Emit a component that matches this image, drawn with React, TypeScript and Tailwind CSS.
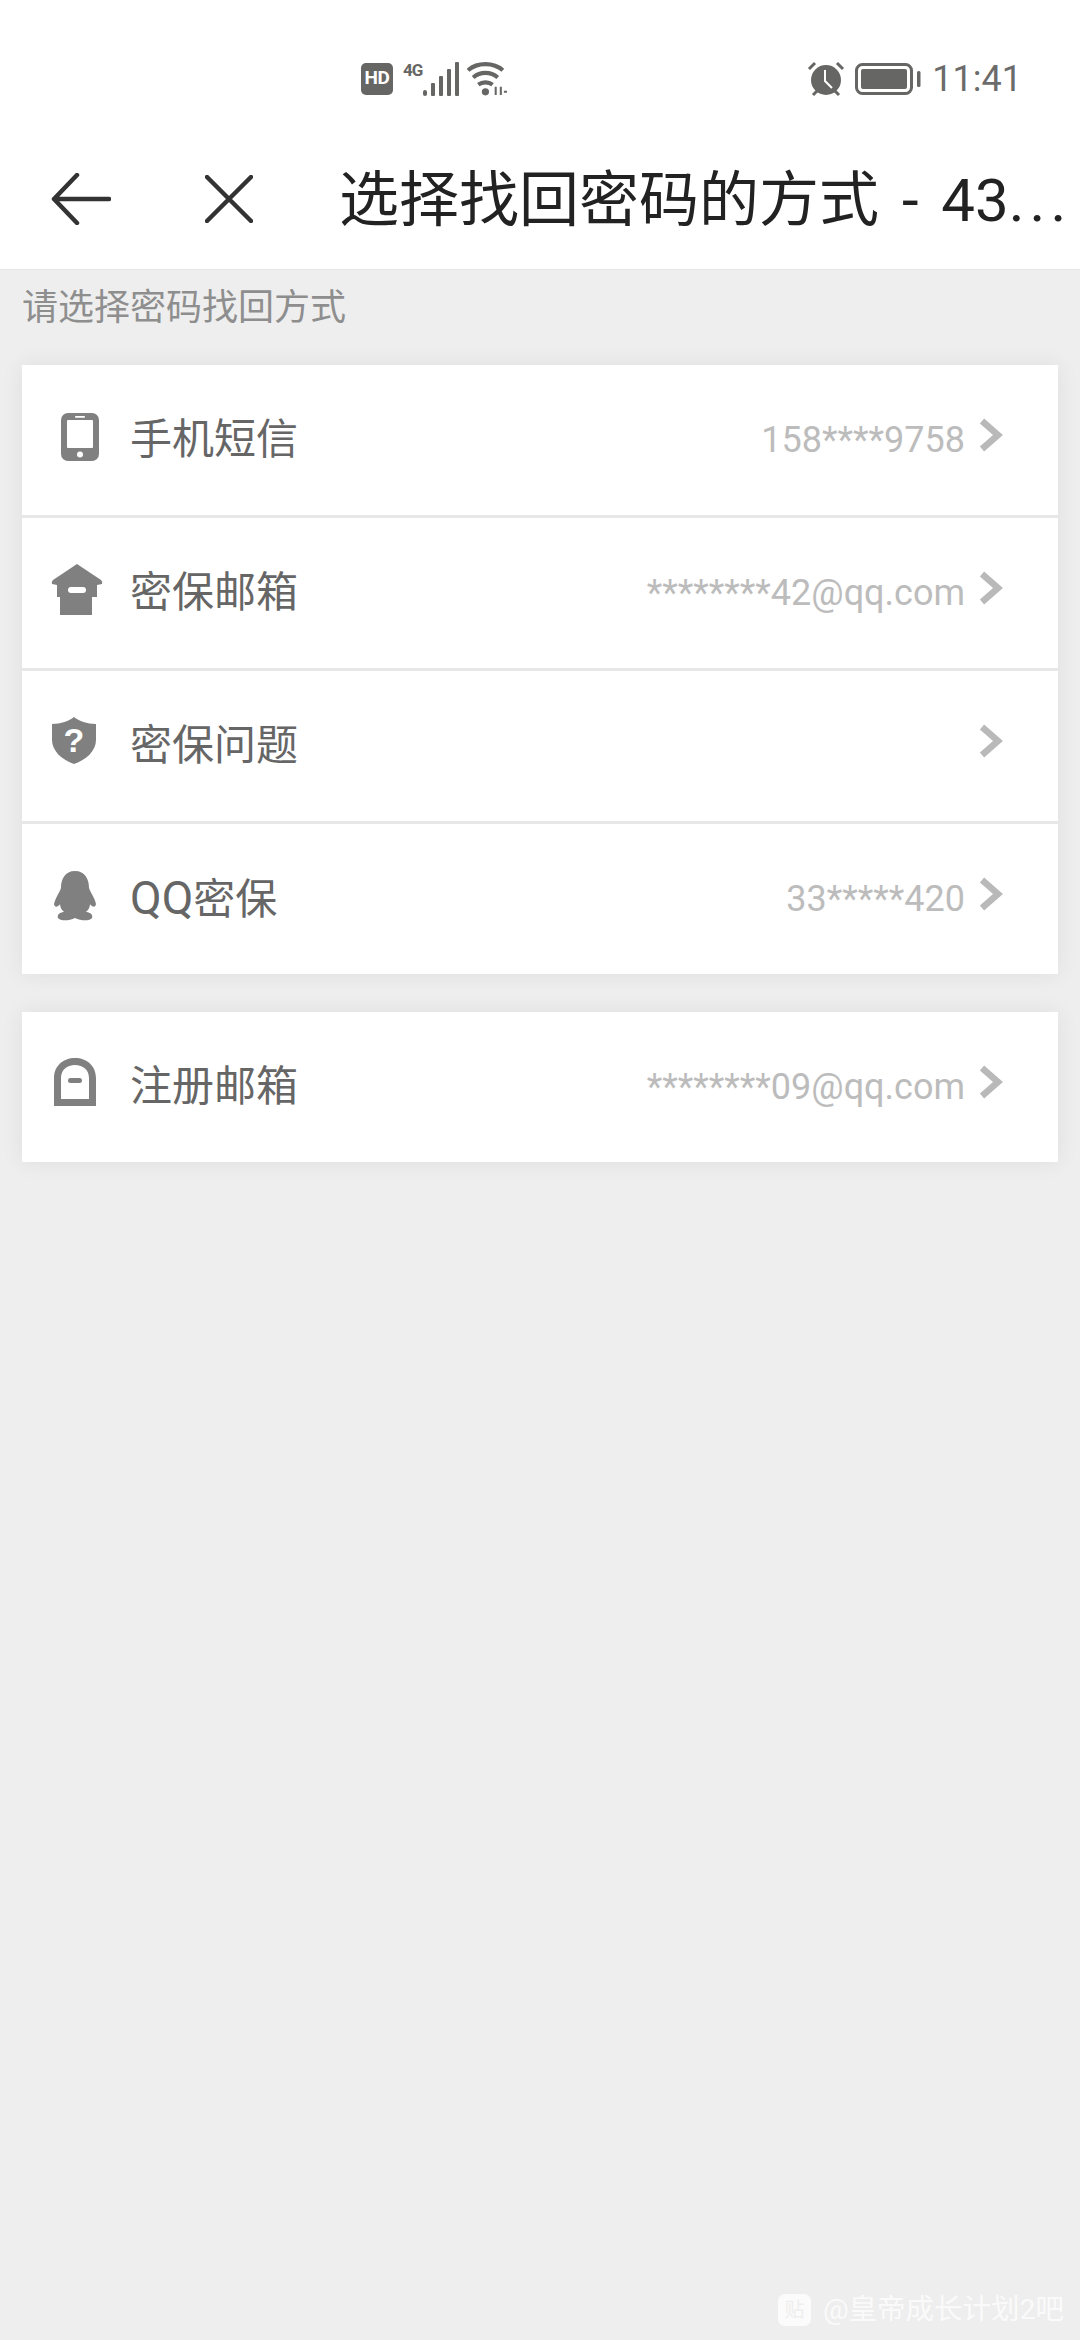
const font = "font-['Roboto','Noto_Sans_CJK_SC',sans-serif]";

function Chevron() {
  return (
    <svg width="24" height="36" viewBox="0 0 24 36" className="shrink-0">
      <path d="M3 3 L19 17 L3 31" fill="none" stroke="#b9b9b9" strokeWidth="6.5" />
    </svg>
  );
}

function PhoneIcon() {
  return (
    <svg width="38" height="48" viewBox="0 0 38 48">
      <rect width="38" height="48" rx="7" fill="#808080" />
      <rect x="6" y="7" width="26" height="28" rx="1" fill="#fff" />
      <rect x="14" y="3" width="10" height="1.8" rx="0.9" fill="#fff" />
      <circle cx="19" cy="41.5" r="3" fill="#fff" />
    </svg>
  );
}

function MailboxIcon() {
  return (
    <svg width="52" height="52" viewBox="0 0 52 52">
      <path
        d="M26 0 L50 16 Q52 18 51 20 L46 21 L46 33 L41 33 L41 51 L9 51 L9 33 L6 33 L6 21 L1 20 Q0 18 2 16 Z"
        fill="#808080"
      />
      <rect x="17" y="23" width="18" height="6" rx="3" fill="#fff" />
    </svg>
  );
}

function ShieldIcon() {
  return (
    <svg width="44" height="48" viewBox="0 0 44 48">
      <path
        d="M22 0 C27 4 35 7 44 7 L44 23 C44 34 34 43 22 47 C10 43 0 34 0 23 L0 7 C9 7 17 4 22 0 Z"
        fill="#808080"
      />
      <text
        x="22"
        y="35"
        textAnchor="middle"
        fontSize="34"
        fontWeight="700"
        fill="#fff"
        fontFamily="'Liberation Sans', sans-serif"
      >
        ?
      </text>
    </svg>
  );
}

function PenguinIcon() {
  return (
    <svg width="42" height="50" viewBox="0 0 42 48" preserveAspectRatio="none">
      <path
        d="M21 0 C31 0 35 8 35 16 C36 20 41 26 42 32 C41 36 38 34 36 32 C36 35 34 38 32 39 C37 40 39 42 38 45 C36 48 27 48 21 45 C15 48 6 48 4 45 C3 42 5 40 10 39 C8 38 6 35 6 32 C4 34 1 36 0 32 C1 26 6 20 7 16 C7 8 11 0 21 0 Z"
        fill="#808080"
      />
    </svg>
  );
}

function ArchIcon() {
  return (
    <svg width="42" height="48" viewBox="0 0 42 48">
      <path
        d="M0 48 L0 20 C0 8 9 0 21 0 C33 0 42 8 42 20 L42 48 Z M7 41 L35 41 L35 20 C35 12 29 7 21 7 C13 7 7 12 7 20 Z"
        fill="#808080"
        fillRule="evenodd"
      />
      <rect x="14" y="20" width="14" height="5" rx="2.5" fill="#808080" />
    </svg>
  );
}

const group1 = [
  { icon: <PhoneIcon />, label: "手机短信", value: "158****9758", slot: "w-[38px] ml-[39px] mr-[31px] mb-[7px]" },
  { icon: <MailboxIcon />, label: "密保邮箱", value: "********42@qq.com", slot: "w-[52px] ml-[29px] mr-[27px] mb-[7px]" },
  { icon: <ShieldIcon />, label: "密保问题", value: "", slot: "w-[44px] ml-[30px] mr-[34px] mb-[10px]" },
  { icon: <PenguinIcon />, label: "QQ密保", value: "33*****420", slot: "w-[42px] ml-[32px] mr-[34px] mb-[7px]" },
];

function Row(props: { icon: React.ReactNode; label: string; value: string; slot: string; line?: boolean }) {
  return (
    <div
      className={
        props.line
          ? "flex h-[153px] items-center border-b-[3px] border-[#e7e7e7] pr-[55px]"
          : "flex h-[150px] items-center pr-[55px]"
      }
    >
      <div className={"flex shrink-0 justify-center " + props.slot}>{props.icon}</div>
      <span className="text-[42px] leading-[50px] text-[#666666]">
        {props.label.startsWith("QQ") ? (
          <>
            <span className="text-[46px]">QQ</span>
            {props.label.slice(2)}
          </>
        ) : (
          props.label
        )}
      </span>
      <span className="ml-auto mr-[14px] text-[36px] leading-[44px] text-[#bcbcbc]">{props.value}</span>
      <div className="mb-[8px] flex">
        <Chevron />
      </div>
    </div>
  );
}

export default function App() {
  return (
    <div className={"relative h-[2340px] w-[1080px] overflow-hidden bg-[#eeeeee] " + font}>
      <div className="h-[270px] border-b border-[#e6e6e6] bg-white">
        <div className="flex h-[135px] items-center pl-[361px] pr-[58px] pt-[22px] text-[#666664]">
          <div className="flex h-[32px] w-[32px] items-center justify-center rounded-[5px] bg-[#666664] text-[19px] font-bold tracking-[-0.5px] text-white">
            HD
          </div>
          <div className="relative ml-[10px] h-[34px] w-[56px]">
            <span className="absolute left-0 top-[-4px] text-[17px] font-bold tracking-[-1px]">4G</span>
            <svg width="56" height="34" viewBox="0 0 56 34" className="absolute left-0 top-0">
              <rect x="20" y="28" width="4" height="6" rx="2" fill="#666664" />
              <rect x="28" y="21" width="4" height="13" rx="1" fill="#666664" />
              <rect x="36" y="14" width="4" height="20" rx="1" fill="#666664" />
              <rect x="44" y="7" width="4" height="27" rx="1" fill="#666664" />
              <rect x="52" y="0" width="4" height="34" rx="1" fill="#666664" />
            </svg>
          </div>
          <svg width="41" height="35" viewBox="0 0 40 34" className="ml-[8px]">
            <path d="M1 9 C10 1 26 1 35 9" fill="none" stroke="#666664" strokeWidth="4" />
            <path d="M6 16 C13 10 23 10 30 16" fill="none" stroke="#666664" strokeWidth="4" />
            <path d="M11 23 C15 20 21 20 25 23" fill="none" stroke="#666664" strokeWidth="4" />
            <circle cx="18" cy="30" r="3.5" fill="#666664" />
            <path d="M28 33 L28 25 M33 25 L33 33 M36 30 L39 30" stroke="#666664" strokeWidth="2" />
          </svg>
          <svg width="38" height="36" viewBox="0 0 38 36" className="ml-auto mr-[10px]">
            <circle cx="19" cy="19" r="15" fill="#666664" />
            <path d="M18 9 L18 20 L25 27" fill="none" stroke="#fff" strokeWidth="2" />
            <path d="M2 8 L8 2 M30 2 L36 8 M6 34 L10 30 M32 34 L28 30" stroke="#666664" strokeWidth="3" />
          </svg>
          <svg width="66" height="32" viewBox="0 0 66 32">
            <rect x="1.5" y="1.5" width="55" height="29" rx="6" fill="none" stroke="#666664" strokeWidth="3" />
            <rect x="6" y="6" width="46" height="20" rx="2" fill="#666664" />
            <rect x="62" y="8" width="3.5" height="16" rx="1.5" fill="#666664" />
          </svg>
          <span className="ml-[11px] text-[36px] leading-none text-[#6b6b6b]">11:41</span>
        </div>
        <div className="flex h-[134px] items-center">
          <svg width="60" height="52" viewBox="0 0 60 52" className="ml-[51px] mb-[7px]">
            <path d="M58 26 L3 26 M26 2 L3 26 L26 50" fill="none" stroke="#333333" strokeWidth="4.5" strokeLinecap="round" strokeLinejoin="round" />
          </svg>
          <svg width="48" height="48" viewBox="0 0 48 48" className="ml-[94px] mb-[7px]">
            <path d="M2 2 L46 46 M46 2 L2 46" fill="none" stroke="#333333" strokeWidth="4.5" strokeLinecap="round" />
          </svg>
          <span className="ml-[86px] mb-[2px] whitespace-nowrap text-[60px] leading-[70px] text-[#222222] [word-spacing:8px]">
            选择找回密码的方式 - 43<span className="tracking-[5px]">...</span>
          </span>
        </div>
      </div>

      <div className="px-[22px]">
        <p className="h-[95px] pt-[16px] text-[36px] leading-[44px] text-[#8e8e8e]">请选择密码找回方式</p>
        <div className="bg-white shadow-[0_0_20px_rgba(60,50,60,0.08)]">
          {group1.map((row, i) => (
            <Row key={row.label} {...row} line={i < 3} />
          ))}
        </div>
        <div className="mt-[38px] bg-white shadow-[0_0_20px_rgba(60,50,60,0.08)]">
          <Row icon={<ArchIcon />} label="注册邮箱" value="********09@qq.com" slot="w-[42px] ml-[32px] mr-[34px] mb-[10px]" />
        </div>
      </div>

      <div className="absolute bottom-[12px] right-[16px] flex items-center gap-[12px] text-white/75">
        <div className="flex h-[32px] w-[33px] items-center justify-center rounded-[7px] bg-white/75 text-[20px] text-[#eeeeee]">
          贴
        </div>
        <span className="whitespace-nowrap text-[28.5px] leading-[36px]">@皇帝成长计划2吧</span>
      </div>
    </div>
  );
}
